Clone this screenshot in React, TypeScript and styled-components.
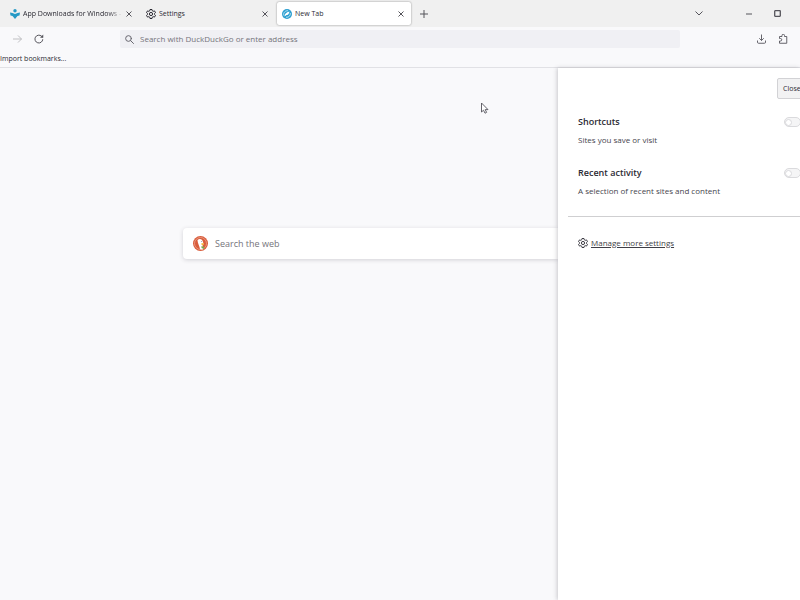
import React from "react";
import styled, { createGlobalStyle } from "styled-components";

const GlobalStyle = createGlobalStyle`
  *, *::before, *::after { box-sizing: border-box; }
  html, body, #root { height: 100%; margin: 0; }
  body {
    overflow: hidden;
    background: #f9f9fb;
    color: #2b2a33;
    font-family: "Open Sans", "Noto Sans", sans-serif;
    font-size: 8px;
    line-height: 12px;
  }
  button, input { font: inherit; color: inherit; margin: 0; }
`;

const Browser = styled.div`
  display: flex;
  flex-direction: column;
  height: 100vh;
  overflow: hidden;
`;

const TabBar = styled.div`
  display: flex;
  align-items: center;
  height: 27px;
  flex: none;
  padding-left: 5px;
  background: #f0f0f0;
`;

const TabItem = styled.div<{ $active?: boolean }>`
  display: flex;
  align-items: center;
  width: 134px;
  height: 23px;
  margin-right: 2px;
  padding: 0 4px 0 5px;
  border-radius: 2px;
  background: ${(p) => (p.$active ? "#ffffff" : "transparent")};
  box-shadow: ${(p) => (p.$active ? "0 0 2px rgba(0, 0, 0, 0.45)" : "none")};
`;

const TabButton = styled.button`
  display: flex;
  align-items: center;
  gap: 3px;
  flex: 1;
  min-width: 0;
  padding: 0;
  border: 0;
  background: none;
  text-align: left;
`;

const TabTitle = styled.span<{ $fade?: boolean }>`
  flex: 1;
  min-width: 0;
  overflow: hidden;
  white-space: nowrap;
  font-size: 7px;
  font-weight: 500;
  mask-image: ${(p) =>
    p.$fade ? "linear-gradient(to right, #000 85%, transparent)" : "none"};
`;

const IconButton = styled.button<{ $size?: number; $faded?: boolean }>`
  display: grid;
  place-items: center;
  flex: none;
  width: ${(p) => p.$size ?? 12}px;
  height: ${(p) => p.$size ?? 12}px;
  padding: 0;
  border: 0;
  background: none;
  color: ${(p) => (p.$faded ? "#b8b8bb" : "#55545b")};
`;

const WindowControls = styled.div`
  display: flex;
  align-items: center;
  margin-left: auto;
  padding-right: 12px;
`;

const ControlGroup = styled.div`
  display: flex;
  gap: 6px;
  margin-left: 28px;
`;

const NavBar = styled.div`
  display: flex;
  align-items: center;
  height: 24px;
  flex: none;
  padding: 0 6px;
`;

const NavGroup = styled.div<{ $end?: boolean }>`
  display: flex;
  align-items: center;
  justify-content: ${(p) => (p.$end ? "flex-end" : "flex-start")};
  width: 114px;
`;

const AddressBar = styled.label`
  display: flex;
  align-items: center;
  gap: 6px;
  flex: 1;
  height: 18px;
  padding: 0 5px;
  border-radius: 2px;
  background: #f0f0f4;
  color: #67666e;
`;

const TextInput = styled.input`
  flex: 1;
  min-width: 0;
  padding: 0;
  border: 0;
  outline: 0;
  background: none;
  &::placeholder { color: #75747b; opacity: 1; }
`;

const BookmarksBar = styled.div`
  display: flex;
  align-items: center;
  height: 17px;
  flex: none;
  border-bottom: 1px solid #e1e1e5;
`;

const BookmarkButton = styled.button`
  padding: 0;
  border: 0;
  background: none;
  font-size: 7px;
  font-weight: 500;
`;

const Content = styled.div`
  display: flex;
  flex: 1;
  min-height: 0;
`;

const NewTabPage = styled.main`
  flex: 1;
  min-width: 0;
  padding: 160px 0 0 183px;
`;

const WebSearch = styled.label`
  display: flex;
  align-items: center;
  gap: 7px;
  height: 31px;
  padding: 0 10px;
  border-radius: 4px 0 0 4px;
  background: #ffffff;
  box-shadow: 0 1px 4px rgba(58, 57, 68, 0.2);
  font-size: 9px;
`;

const SettingsPanel = styled.aside`
  position: relative;
  width: 242px;
  flex: none;
  overflow: clip;
  overflow-clip-margin: 6px;
  padding: 10px 0 0 10px;
  background: #ffffff;
  box-shadow: -1px 0 4px rgba(58, 57, 68, 0.25);
`;

const PanelHeader = styled.div`
  display: flex;
  padding-left: 209px;
`;

const CloseButton = styled.button`
  flex: none;
  height: 21px;
  padding: 0 5px;
  border: 1px solid #d2d2d5;
  border-radius: 2px;
  background: #f2f2f3;
  font-size: 7px;
  font-weight: 500;
`;

const SettingRow = styled.section`
  display: grid;
  grid-template-columns: 1fr 20px;
  row-gap: 4px;
  align-items: center;
  margin-right: -4px;
  padding: 15px 0 0 10px;
  & + & { padding-top: 19px; }
`;

const SettingTitle = styled.label`
  font-size: 9px;
  line-height: 16px;
  font-weight: 600;
`;

const SettingText = styled.p`
  margin: 0;
  color: #46454d;
`;

const Switch = styled.input`
  appearance: none;
  display: flex;
  align-items: center;
  width: 17px;
  height: 10px;
  border: 1px solid #dadadd;
  border-radius: 5px;
  background: #f5f5f6;
  &::before {
    content: "";
    width: 7px;
    height: 7px;
    border: 1px solid #dadadd;
    border-radius: 50%;
    background: #ffffff;
  }
  &:checked { justify-content: flex-end; }
`;

const Divider = styled.hr`
  margin: 19px 0 20px;
  border: 0;
  border-top: 1px solid #cfcfd1;
`;

const ManageLink = styled.a`
  display: inline-flex;
  align-items: center;
  gap: 3px;
  margin-left: 10px;
  color: #3f3e46;
  text-decoration: underline;
`;

const Pointer = styled.svg`
  position: absolute;
  left: 480px;
  top: 102px;
  pointer-events: none;
`;

const Gear = () => (
  <svg width="10" height="10" viewBox="0 0 20 20" fill="none" stroke="currentColor" strokeWidth="2" strokeLinejoin="round" aria-hidden="true">
    <path d="M8 1h4l.6 2.7 1.7 1 2.7-.9 2 3.500-2.100 1.800v1.800l2.100 1.800-2 3.500-2.700-.9-1.700 1L12 19H8l-.6-2.700-1.700-1-2.700.9-2-3.500 2.100-1.800V9.100L1 7.300l2-3.500 2.700.9 1.700-1z" />
    <circle cx="10" cy="10" r="3.2" />
  </svg>
);

const Cross = () => (
  <svg width="6" height="6" viewBox="0 0 6 6" stroke="currentColor" strokeWidth="1" aria-hidden="true">
    <path d="M.5.5l5 5M5.5.5l-5 5" />
  </svg>
);

const DownloadsLogo = () => (
  <svg width="10" height="10" viewBox="0 0 20 20" fill="#2599c5" aria-hidden="true">
    <circle cx="10" cy="3.400" r="3.400" />
    <path d="M0 7l5 1 5 2 5-2 5-1-1 6-4 1-5 6-5-6-4-1z" />
  </svg>
);

const NewTabLogo = () => (
  <svg width="10" height="10" viewBox="0 0 20 20" fill="none" aria-hidden="true">
    <circle cx="10" cy="10" r="10" fill="#2c9fd0" />
    <path d="M3.500 13C2 7 7 3 12 3.500M8 16.500c6 1 9.500-4 8.500-8.500" stroke="#bfe8f6" strokeWidth="1.800" />
    <path d="M5 15c0-5 3-8 10-10-1 6-4 7-6 7z" fill="#fff" />
  </svg>
);

const DuckLogo = () => (
  <svg width="15" height="15" viewBox="0 0 30 30" aria-hidden="true">
    <circle cx="15" cy="15" r="15" fill="#d95c3b" />
    <circle cx="15" cy="15" r="12" fill="none" stroke="#f0b9a6" strokeWidth="1.200" />
    <path d="M9 8c5-4 10-1 11 4l1 4-2 3 2 7c-3 2-5 1-7 0-1-6-5-12-5-18z" fill="#fff" />
    <path d="M17 14l5 1-1 3h-4z" fill="#f4b73c" />
    <path d="M17 20l6 2-1 4-5-2z" fill="#7aa84b" />
    <circle cx="17" cy="11" r=".8" fill="#31506b" />
  </svg>
);

const Magnifier = () => (
  <svg width="9" height="9" viewBox="0 0 18 18" fill="none" stroke="currentColor" strokeWidth="2" strokeLinecap="round" aria-hidden="true">
    <circle cx="7" cy="7" r="5.700" />
    <path d="M11.200 11.200L17 17" />
  </svg>
);

type TabProps = {
  title: string;
  icon: React.ReactNode;
  active?: boolean;
  fade?: boolean;
};

const Tab = ({ title, icon, active, fade }: TabProps) => (
  <TabItem $active={active}>
    <TabButton role="tab" aria-selected={!!active}>
      {icon}
      <TabTitle $fade={fade}>{title}</TabTitle>
    </TabButton>
    <IconButton aria-label={`Close ${title}`}><Cross /></IconButton>
  </TabItem>
);

const Setting = ({ id, title, text }: { id: string; title: string; text: string }) => (
  <SettingRow>
    <SettingTitle htmlFor={id}>{title}</SettingTitle>
    <Switch id={id} type="checkbox" role="switch" />
    <SettingText>{text}</SettingText>
  </SettingRow>
);

export default function App() {
  return (
    <>
      <GlobalStyle />
      <Browser>
        <TabBar role="tablist">
          <Tab title="App Downloads for Windows -" icon={<DownloadsLogo />} fade />
          <Tab title="Settings" icon={<Gear />} />
          <Tab title="New Tab" icon={<NewTabLogo />} active />
          <IconButton $size={22} aria-label="Open a new tab">
            <svg width="8" height="8" viewBox="0 0 8 8" stroke="currentColor" strokeWidth="1" aria-hidden="true">
              <path d="M4 0v8M0 4h8" />
            </svg>
          </IconButton>
          <WindowControls>
            <IconButton $size={22} aria-label="List all tabs">
              <svg width="8" height="5" viewBox="0 0 8 5" fill="none" stroke="currentColor" strokeWidth="1" aria-hidden="true">
                <path d="M.5.5L4 4 7.5.5" />
              </svg>
            </IconButton>
            <ControlGroup>
              <IconButton $size={22} aria-label="Minimize">
                <svg width="6" height="2" viewBox="0 0 6 2" aria-hidden="true">
                  <path d="M0 .5h6v1H0z" fill="currentColor" />
                </svg>
              </IconButton>
              <IconButton $size={22} aria-label="Maximize">
                <svg width="7" height="7" viewBox="0 0 7 7" fill="none" stroke="currentColor" strokeWidth="1.3" aria-hidden="true">
                  <rect x=".7" y=".7" width="5.6" height="5.6" rx=".5" />
                </svg>
              </IconButton>
            </ControlGroup>
          </WindowControls>
        </TabBar>

        <NavBar>
          <NavGroup>
            <IconButton $size={22} $faded aria-label="Forward">
              <svg width="9" height="8" viewBox="0 0 18 16" fill="none" stroke="currentColor" strokeWidth="1.8" aria-hidden="true">
                <path d="M0 8h17M10 1l7 7-7 7" />
              </svg>
            </IconButton>
            <IconButton $size={22} aria-label="Reload">
              <svg width="10" height="10" viewBox="0 0 20 20" fill="none" stroke="currentColor" strokeWidth="2" aria-hidden="true">
                <path d="M17.5 10.5A7.8 7.8 0 1 1 15 4.4l2 1.8" />
                <path d="M18.5 1v6.5H12z" fill="currentColor" stroke="none" />
              </svg>
            </IconButton>
          </NavGroup>
          <AddressBar>
            <Magnifier />
            <TextInput aria-label="Address" placeholder="Search with DuckDuckGo or enter address" />
          </AddressBar>
          <NavGroup $end>
            <IconButton $size={22} aria-label="Downloads">
              <svg width="9" height="10" viewBox="0 0 18 20" fill="none" stroke="currentColor" strokeWidth="1.8" aria-hidden="true">
                <path d="M9 1v12M4.500 8.500L9 13l4.500-4.500M1 13v3.500A2 2 0 0 0 3 18.500h12a2 2 0 0 0 2-2V13" />
              </svg>
            </IconButton>
            <IconButton $size={22} aria-label="Extensions">
              <svg width="10" height="10" viewBox="0 0 20 20" fill="none" stroke="currentColor" strokeWidth="1.8" strokeLinejoin="round" aria-hidden="true">
                <path d="M8 5V3a2.500 2.500 0 0 1 5 0v2h4.500v13.500H3v-4.500h2a2.500 2.500 0 0 0 0-5H3V5z" />
              </svg>
            </IconButton>
          </NavGroup>
        </NavBar>

        <BookmarksBar>
          <BookmarkButton>Import bookmarks...</BookmarkButton>
        </BookmarksBar>

        <Content>
          <NewTabPage>
            <WebSearch>
              <DuckLogo />
              <TextInput aria-label="Web search" placeholder="Search the web" />
            </WebSearch>
          </NewTabPage>
          <SettingsPanel>
            <PanelHeader>
              <CloseButton>Close</CloseButton>
            </PanelHeader>
            <Setting id="shortcuts" title="Shortcuts" text="Sites you save or visit" />
            <Setting id="recent" title="Recent activity" text="A selection of recent sites and content" />
            <Divider />
            <ManageLink href="#settings"><Gear />Manage more settings</ManageLink>
          </SettingsPanel>
        </Content>
      </Browser>
      <Pointer width="9" height="12" viewBox="0 0 9 12" aria-hidden="true">
        <path d="M1.500 1v9l2-1.800 1.500 3 1.600-.8L5.200 7.600H8z" fill="#fff" stroke="#55545b" strokeWidth=".9" />
      </Pointer>
    </>
  );
}
